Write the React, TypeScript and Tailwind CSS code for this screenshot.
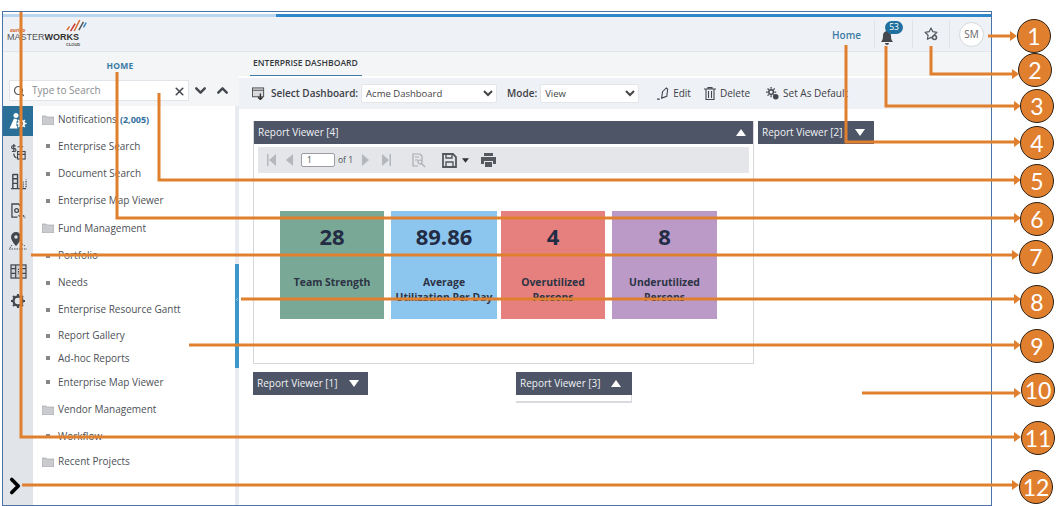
import React from 'react';
import { ChevronDown, ChevronLeft, ChevronRight, ChevronUp, Search, X } from 'lucide-react';

const navItems = [
  { label: 'Notifications', folder: true, rowClass: 'h-[25px]', count: '(2,005)' },
  { label: 'Enterprise Search', rowClass: 'h-[28px]' },
  { label: 'Document Search', rowClass: 'h-[27px]' },
  { label: 'Enterprise Map Viewer', rowClass: 'h-[27px]' },
  { label: 'Fund Management', folder: true, rowClass: 'h-[28px]' },
  { label: 'Portfolio', rowClass: 'h-[27px]' },
  { label: 'Needs', rowClass: 'h-[27px]' },
  { label: 'Enterprise Resource Gantt', rowClass: 'h-[27px]' },
  { label: 'Report Gallery', rowClass: 'h-[25px]' },
  { label: 'Ad-hoc Reports', rowClass: 'h-[20px]' },
  { label: 'Enterprise Map Viewer', rowClass: 'h-[28px]' },
  { label: 'Vendor Management', folder: true, rowClass: 'h-[27px]' },
  { label: 'Workflow', rowClass: 'h-[26px]' },
  { label: 'Recent Projects', folder: true, rowClass: 'h-[25px]' },
];

const stats = [
  { value: '28', label: 'Team Strength', boxClass: 'w-[104px] bg-[#7aa897]', mlClass: '' },
  { value: '89.86', label: 'Average\nUtilization Per Day', boxClass: 'w-[106px] bg-[#8cc6ef]', mlClass: 'ml-[7px]' },
  { value: '4', label: 'Overutilized\nPersons', boxClass: 'w-[104px] bg-[#e5807f]', mlClass: 'ml-[4px]' },
  { value: '8', label: 'Underutilized\nPersons', boxClass: 'w-[105px] bg-[#bb9ac8]', mlClass: 'ml-[7px]' },
];

const callouts = [
  { n: 1, pos: 'left-[1017px] top-[19px]', d: 'M988 36H1010', y: 36, x: 1010 },
  { n: 2, pos: 'left-[1018px] top-[53px]', d: 'M931 46V74H1012', y: 74, x: 1012 },
  { n: 3, pos: 'left-[1020px] top-[89px]', d: 'M886 46V106H1014', y: 106, x: 1014 },
  { n: 4, pos: 'left-[1020px] top-[126px]', d: 'M846 45V142H1014', y: 142, x: 1014 },
  { n: 5, pos: 'left-[1020px] top-[164px]', d: 'M159 93V180H1014', y: 180, x: 1014 },
  { n: 6, pos: 'left-[1020px] top-[202px]', d: 'M117 72V218H1014', y: 218, x: 1014 },
  { n: 7, pos: 'left-[1019px] top-[240px]', d: 'M31 255H1012', y: 255, x: 1012 },
  { n: 8, pos: 'left-[1020px] top-[285px]', d: 'M241 299H1014', y: 299, x: 1014 },
  { n: 9, pos: 'left-[1020px] top-[329px]', d: 'M189 345H1014', y: 345, x: 1014 },
  { n: 10, pos: 'left-[1021px] top-[373px]', d: 'M862 393H1014', y: 393, x: 1014 },
  { n: 11, pos: 'left-[1021px] top-[421px]', d: 'M21 12V437H1014', y: 437, x: 1014 },
  { n: 12, pos: 'left-[1019px] top-[470px]', d: 'M22 485H1012', y: 485, x: 1012 },
];

const Folder = () => (
  <svg viewBox="0 0 12 10" className="w-[12px] h-[10px] shrink-0">
    <path d="M0 1h4l1 1h7v8H0z" fill="#c9cbcf" stroke="#9a9da3" strokeWidth="0.6" />
  </svg>
);

const Caret = ({ up }: { up?: boolean }) => (
  <svg viewBox="0 0 10 7" className="w-[10px] h-[7px]">
    <path d={up ? 'M5 0l5 7H0z' : 'M0 0h10L5 7z'} fill="#fff" />
  </svg>
);

const PagerArrow = ({ d }: { d: string }) => (
  <svg viewBox="0 0 10 12" className="w-[10px] h-[12px]">
    <path d={d} fill="#b4b7bc" />
  </svg>
);

const GearIcon = ({ className }: { className: string }) => (
  <svg viewBox="0 0 16 16" className={className}>
    <circle cx="8" cy="8" r="4.500" fill="none" stroke="currentColor" strokeWidth="2.400" />
    <path d="M8 1v3M8 12v3M1 8h3M12 8h3M3 3l2 2M11 11l2 2M13 3l-2 2M5 11l-2 2" stroke="currentColor" strokeWidth="2" />
  </svg>
);

const ViewerHead = ({ title, up, className }: { title: string; up?: boolean; className: string }) => (
  <div className={`h-[23px] bg-[#4d5567] text-[#f0f1f3] text-[10px] flex items-center justify-between pl-[4px] ${className}`}>
    <span>{title}</span>
    <Caret up={up} />
  </div>
);

const RailIcon = ({ children, active }: { children: React.ReactNode; active?: boolean }) => (
  <div className={`h-[30px] flex items-center justify-center ${active ? 'bg-[#2a6f97] text-white' : 'text-[#44474d]'}`}>{children}</div>
);

const App: React.FC = () => {
  return (
    <div className="relative w-[1057px] h-[506px] bg-white overflow-hidden font-['Open_Sans',sans-serif] text-[#4a4d52]">
      <div className="mt-[11px] ml-[2px] w-[990px] h-[495px] border border-[#4a74a8] flex flex-col">
        <div className="h-[2px] bg-white shrink-0" />
        <div className="h-[3px] flex shrink-0">
          <div className="w-[273px] bg-[#bcd5ee]" />
          <div className="flex-1 bg-[#2f86c8]" />
        </div>

        {/* top bar */}
        <div className="h-[35px] shrink-0 bg-[#eef1f5] border-b border-[#e2e5e9] flex items-center">
          <div className="ml-[4px] w-[90px] h-[34px] relative leading-none">
            <svg viewBox="0 0 26 16" className="absolute left-[58px] top-[1px] w-[24px] h-[15px]">
              <path d="M2 13l3-4" stroke="#d9662b" strokeWidth="1.600" />
              <path d="M6 14l5-8" stroke="#c8342b" strokeWidth="1.600" />
              <path d="M10 14l6-12" stroke="#d9662b" strokeWidth="1.600" />
              <path d="M15 13l5-9" stroke="#555" strokeWidth="1.600" />
              <path d="M20 10l3-5" stroke="#2f86c8" strokeWidth="1.600" />
            </svg>
            <span className="absolute left-[3px] top-[11px] text-[5px] text-[#d9662b] italic font-bold">aurigo</span>
            <span className="absolute left-[0px] top-[16px] text-[9px] text-[#555] font-['Liberation_Sans',sans-serif]">
              MASTER<b className="text-[#333]">WORKS</b>
            </span>
            <span className="absolute left-[59px] top-[26px] text-[4px] font-bold text-[#444] font-['Liberation_Sans',sans-serif]">CLOUD</span>
          </div>
          <div className="flex-1" />
          <span className="text-[10px] font-semibold text-[#3a7ca5] mr-[13px] mt-[2px]">Home</span>
          <div className="w-px h-[28px] bg-[#dfe2e6]" />
          <div className="w-[37px] h-[30px] relative">
            <svg viewBox="0 0 12 16" className="absolute left-[6px] top-[11px] w-[12px] h-[16px]">
              <path d="M6 0a1 1 0 011 1.200C9.500 2 10 4 10 6c0 3 .6 4.500 2 6H0c1.400-1.500 2-3 2-6 0-2 .5-4 3-4.800A1 1 0 016 0z" fill="#44474d" />
              <path d="M4 13h4a2 2 0 01-4 0z" fill="#44474d" />
            </svg>
            <span className="absolute left-[10px] top-[2px] w-[18px] h-[13px] rounded-[7px] bg-[#1f6f9f] text-white text-[8.500px] flex items-center justify-center">53</span>
          </div>
          <div className="w-px h-[28px] bg-[#dfe2e6]" />
          <div className="w-[36px] flex justify-center">
            <svg viewBox="0 0 14 14" className="w-[14px] h-[14px]" fill="none" stroke="#555a62" strokeWidth="1.200">
              <path d="M7 1l1.800 3.700 4.100.6-3 2.900.7 4.100L7 10.400l-3.600 1.900.7-4.100-3-2.900 4.100-.6z" strokeLinejoin="round" />
              <circle cx="10.500" cy="10.500" r="2" fill="#eef1f5" strokeWidth="1.500" />
            </svg>
          </div>
          <div className="w-px h-[28px] bg-[#dfe2e6]" />
          <div className="ml-[9px] mr-[7px] w-[25px] h-[25px] rounded-full bg-white border border-[#d5d8dc] text-[10px] text-[#666] flex items-center justify-center">SM</div>
        </div>

        <div className="flex-1 flex min-h-0">
          {/* left panel */}
          <div className="w-[236px] shrink-0 flex flex-col bg-[#f3f5f7]">
            <div className="h-[28px] shrink-0 flex items-center justify-center text-[8.500px] font-bold text-[#3a7ca5] pr-[2px] tracking-[0.2px]">HOME</div>
            <div className="h-[21px] shrink-0 flex items-center">
              <div className="ml-[6px] w-[180px] h-[21px] bg-white border border-[#e1e4e8] flex items-center relative">
                <Search size={12} className="ml-[3px] text-[#555]" strokeWidth={2.400} />
                <span className="ml-[7px] text-[10px] text-[#8a8d92]">Type to Search</span>
                <X size={13} strokeWidth={3} className="absolute right-[2px] top-[4px] text-[#44474d]" />
              </div>
              <ChevronDown size={17} strokeWidth={3.400} className="ml-[3px] text-[#44474d]" />
              <ChevronUp size={17} strokeWidth={3.400} className="ml-[5px] text-[#44474d]" />
            </div>
            <div className="flex-1 flex min-h-0 mt-[5px]">
              <div className="w-[30px] shrink-0 bg-[#e1e5ea] flex flex-col">
                <RailIcon active>
                  <svg viewBox="0 0 18 18" className="w-[18px] h-[18px]">
                    <path d="M7 1c1.500 0 2.500 1 2.500 2.500S8.500 6 7 6 4.500 5 4.500 3.500 5.500 1 7 1z" fill="#fff" />
                    <path d="M5 6.500L0.500 16.500h8l-1-3.500 1-5.500z" fill="#fff" />
                    <circle cx="12.500" cy="11.500" r="5.200" fill="#2a6f97" />
                    <circle cx="12.500" cy="11.500" r="2.600" fill="none" stroke="#fff" strokeWidth="1.800" />
                    <path d="M12.500 6.500v2M12.500 14.500v2M7.500 11.500h2M15.500 11.500h2M9 8l1.500 1.500M14.500 13.500L16 15M16 8l-1.500 1.500M10.500 13.500L9 15" stroke="#fff" strokeWidth="1.300" />
                  </svg>
                </RailIcon>
                <RailIcon>
                  <svg viewBox="0 0 18 18" className="w-[17px] h-[17px]" fill="none" stroke="currentColor" strokeWidth="1.200">
                    <path d="M4 1v8M6 3H3.200a1.200 1.200 0 000 3h1.600a1.200 1.200 0 010 3H2" />
                    <path d="M8 4h6M4 11c0 3 1 4 3 5" />
                    <rect x="8" y="9" width="8" height="8" />
                    <path d="M8 12h8M11 9v8" />
                  </svg>
                </RailIcon>
                <RailIcon>
                  <svg viewBox="0 0 18 18" className="w-[17px] h-[17px]" fill="none" stroke="currentColor" strokeWidth="1.500">
                    <path d="M3 1v15M8 1v15M1 16.500h16M3 1.500h5M3 6h5M3 11h5" />
                    <path d="M11 15v-3M14 15V9M17 15V7" strokeDasharray="1.500 1" strokeWidth="1.300" />
                  </svg>
                </RailIcon>
                <RailIcon>
                  <svg viewBox="0 0 16 18" className="w-[15px] h-[17px]" fill="none" stroke="currentColor" strokeWidth="1.400">
                    <path d="M7 15H1V1h7l3 3v5" />
                    <circle cx="6" cy="8" r="2" />
                    <path d="M8 13l3 3M13 13l2 3" strokeDasharray="2 1" />
                  </svg>
                </RailIcon>
                <RailIcon>
                  <svg viewBox="0 0 18 18" className="w-[18px] h-[18px]">
                    <path d="M7 0a5 5 0 00-5 5c0 4 5 9 5 9s5-5 5-9a5 5 0 00-5-5z" fill="currentColor" />
                    <circle cx="7" cy="5" r="1.700" fill="#e1e5ea" />
                    <path d="M0 17h18M3 13l-2 3M13 12l3 2" stroke="currentColor" strokeWidth="1" strokeDasharray="1.500 1" />
                  </svg>
                </RailIcon>
                <RailIcon>
                  <svg viewBox="0 0 18 16" className="w-[17px] h-[15px]" fill="none" stroke="currentColor" strokeWidth="1.300">
                    <rect x="1" y="1" width="16" height="14" fill="#cfd2d6" />
                    <path d="M6 1v14M12 1v14M1 5h5M12 5h5M1 10h5M12 10h5" />
                    <path d="M9 5v6" strokeDasharray="1.500 1" />
                  </svg>
                </RailIcon>
                <RailIcon>
                  <GearIcon className="w-[16px] h-[16px]" />
                </RailIcon>
                <div className="flex-1" />
                <div className="h-[36px] pt-[4px] flex justify-start text-black">
                  <ChevronRight size={26} strokeWidth={3.400} className="ml-[-1px]" />
                </div>
              </div>

              <div className="w-[202px] bg-white flex flex-col pt-[1px] text-[10px] text-[#4d5056]">
                {navItems.map((item, i) => (
                  <div key={i} className={`${item.rowClass} flex items-center shrink-0`}>
                    {item.folder ? (
                      <div className="ml-[9px] w-[16px]"><Folder /></div>
                    ) : (
                      <div className="ml-[13px] w-[12px]"><div className="w-[4px] h-[4px] bg-[#85878c]" /></div>
                    )}
                    <span>{item.label}</span>
                    {item.count && <span className="ml-[3px] text-[9px] font-bold text-[#2f6f9f]">{item.count}</span>}
                  </div>
                ))}
              </div>

              <div className="w-[4px] shrink-0 bg-[#e8ebef] flex flex-col">
                <div className="h-[158px]" />
                <div className="h-[104px] bg-[#3d97c9] flex items-center justify-center pb-[34px]">
                  <ChevronLeft size={7} strokeWidth={3} className="text-white" />
                </div>
              </div>
            </div>
          </div>

          {/* main */}
          <div className="flex-1 min-w-0 flex flex-col">
            <div className="h-[24px] shrink-0 bg-[#f3f5f7] pl-[11px]">
              <div className="w-[112px] h-[24px] border-b-[1.500px] border-[#3a7ca5] pl-[3px] flex items-center text-[8.600px] font-semibold text-[#35383d]">ENTERPRISE DASHBOARD</div>
            </div>
            <div className="h-[2px] bg-white shrink-0" />
            <div className="h-[31px] shrink-0 bg-[#eef1f5] flex items-center text-[10px] text-[#3d4045]">
              <svg viewBox="0 0 14 14" className="ml-[13px] w-[13px] h-[13px]" fill="none" stroke="#555" strokeWidth="1.100">
                <rect x="0.500" y="1" width="12" height="9.500" fill="#d8dade" />
                <path d="M0.500 3.500h12" />
                <path d="M9 7v6M6.500 11l2.500 2.500 2.500-2.500" strokeWidth="1.500" stroke="#333" />
              </svg>
              <span className="ml-[6px] font-semibold">Select Dashboard:</span>
              <select className="ml-[3px] w-[136px] h-[19px] bg-white rounded-[2px] border border-[#e3e5e8] text-[9.500px] text-[#444]" defaultValue="Acme Dashboard">
                <option>Acme Dashboard</option>
              </select>
              <span className="ml-[10px] font-semibold">Mode:</span>
              <select className="ml-[3px] w-[99px] h-[19px] bg-white rounded-[2px] border border-[#e3e5e8] text-[9.500px] text-[#444]" defaultValue="View">
                <option>View</option>
              </select>
              <svg viewBox="0 0 14 14" className="ml-[18px] w-[13px] h-[13px]" fill="none" stroke="#44474d" strokeWidth="1.200">
                <path d="M0 13h3M5 12l1-7 4-4 1.500 1.500-1 7.500z" />
              </svg>
              <span className="ml-[3px]">Edit</span>
              <svg viewBox="0 0 12 13" className="ml-[13px] w-[12px] h-[13px]" fill="none" stroke="#44474d" strokeWidth="1.100">
                <path d="M0 2h12M4 2V.6h4V2M2 2v10.500h8V2M4.500 4v7M7.500 4v7" />
              </svg>
              <span className="ml-[4px]">Delete</span>
              <svg viewBox="0 0 14 14" className="ml-[16px] w-[13px] h-[13px]" fill="none" stroke="#44474d">
                <circle cx="5.500" cy="5.500" r="2.500" strokeWidth="1.600" />
                <path d="M5.500 0v2M5.500 9v2M0 5.500h2M9 5.500h2M1.700 1.700L3 3M8 8l1.300 1.300M9.300 1.700L8 3M3 8L1.700 9.300" strokeWidth="1.400" />
                <circle cx="10.500" cy="10.500" r="3" fill="#44474d" stroke="none" />
              </svg>
              <span className="ml-[4px]">Set As Default</span>
            </div>

            <div className="flex-1 bg-white pt-[12px] pl-[14px]">
              <div className="flex items-start">
                <div className="w-[501px] h-[243px] border-x border-b border-[#d5d7da]">
                  <ViewerHead title="Report Viewer [4]" up className="pr-[7px]" />
                  <div className="mt-[3px] mx-[4px] h-[26px] bg-[#e4e6e9] flex items-center text-[8.500px]">
                    <div className="ml-[9px]"><PagerArrow d="M0 0h1.500v12H0zM9 0v12L2 6z" /></div>
                    <div className="ml-[8px]"><PagerArrow d="M8 0v12L1 6z" /></div>
                    <div className="ml-[6px] w-[34px] h-[14px] bg-white border border-[#9a9da3] rounded-[2px] pl-[5px] flex items-center">1</div>
                    <span className="ml-[3px]">of 1</span>
                    <div className="ml-[8px]"><PagerArrow d="M1 0v12l7-6z" /></div>
                    <div className="ml-[10px]"><PagerArrow d="M1 0v12l7-6zM8.500 0H10v12H8.500z" /></div>
                    <svg viewBox="0 0 14 15" className="ml-[21px] w-[14px] h-[15px]" fill="none" stroke="#a9acb1" strokeWidth="1.200">
                      <path d="M6 13H1V1h7l2 2v5M3 4h4M3 7h3" />
                      <circle cx="8" cy="9" r="2" />
                      <path d="M10 11l3 3" />
                    </svg>
                    <svg viewBox="0 0 15 15" className="ml-[16px] w-[15px] h-[15px]" fill="none" stroke="#55585e" strokeWidth="1.800">
                      <path d="M1 1h10l3 3v10H1z" />
                      <path d="M4 1v4h6V1M4 14V9h7v5" strokeWidth="1.400" />
                    </svg>
                    <svg viewBox="0 0 6 4" className="ml-[5px] w-[7px] h-[5px]"><path d="M0 0h6L3 4z" fill="#333" /></svg>
                    <svg viewBox="0 0 15 14" className="ml-[12px] w-[15px] h-[14px]">
                      <path d="M3 0h9v3H3zM0 4h15v7h-3V8H3v3H0zM4 9h7v5H4z" fill="#55585e" />
                    </svg>
                  </div>
                  <div className="mt-[38px] ml-[26px] flex">
                    {stats.map(s => (
                      <div key={s.label} className={`${s.boxClass} ${s.mlClass} h-[108px] overflow-hidden flex flex-col items-center text-center text-[#222c44]`}>
                        <div className="mt-[9px] h-[32px] text-[22px] font-bold leading-[32px]">{s.value}</div>
                        <div className="mt-[23px] whitespace-pre-line text-[10.400px] font-bold leading-[15px] text-[#2c3344]">{s.label}</div>
                      </div>
                    ))}
                  </div>
                </div>
                <ViewerHead title="Report Viewer [2]" className="ml-[4px] w-[116px] pr-[9px]" />
              </div>
              <div className="mt-[8px] flex items-start">
                <ViewerHead title="Report Viewer [1]" className="w-[115px] pr-[9px]" />
                <div className="ml-[148px] w-[116px] h-[31px] border-b-2 border-r border-[#d8dadd]">
                  <ViewerHead title="Report Viewer [3]" up className="w-[116px] pr-[11px]" />
                </div>
              </div>
            </div>
          </div>
        </div>
      </div>

      {/* callout lines */}
      <svg viewBox="0 0 1057 506" className="absolute inset-0 w-[1057px] h-[506px] pointer-events-none" fill="none">
        {callouts.map(c => (
          <g key={c.n}>
            <path d={c.d} stroke="#e0802f" strokeWidth="3" />
            <path d={`M${c.x} ${c.y - 5}l7 5-7 5z`} fill="#e0802f" />
          </g>
        ))}
      </svg>
      {callouts.map(c => (
        <div
          key={c.n}
          className={`absolute ${c.pos} w-[34px] h-[34px] rounded-full bg-[#e0802f] border border-[#2b2118] text-white text-[23px] font-['Lato',sans-serif] flex items-center justify-center leading-none`}
        >
          {c.n}
        </div>
      ))}
    </div>
  );
};

export default App;
